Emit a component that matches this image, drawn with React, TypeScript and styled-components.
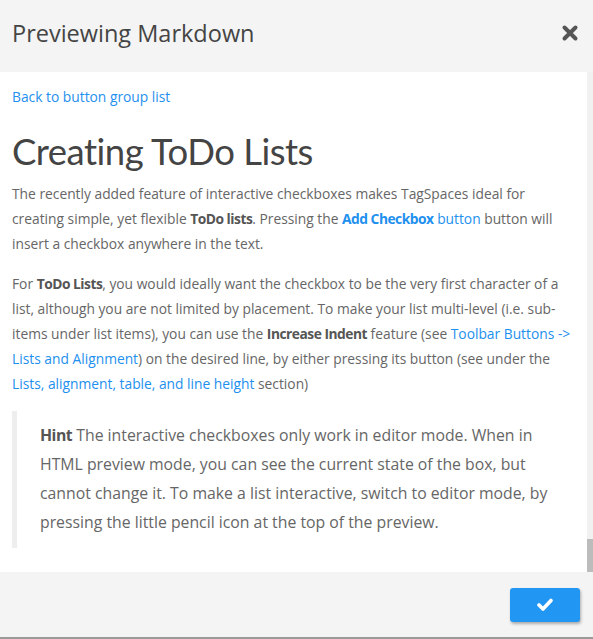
import React from "react";
import styled, { createGlobalStyle } from "styled-components";

const GlobalStyle = createGlobalStyle`
  html, body { margin: 0; padding: 0; }
  body {
    font-family: "Open Sans", "Noto Sans", sans-serif;
    background: #f4f4f4;
  }
  * { box-sizing: border-box; }
`;

const Dialog = styled.div`
  width: 593px;
  height: 639px;
  display: flex;
  flex-direction: column;
  background: #f4f4f4;
  border-bottom: 2px solid #9a9a9a;
`;

const Header = styled.header`
  height: 72px;
  flex: none;
  display: flex;
  align-items: center;
  justify-content: space-between;
  padding: 0 14px 7px 12px;
`;

const Title = styled.h1`
  margin: 0;
  font-size: 23.5px;
  font-weight: 400;
  color: #444;
`;

const CloseButton = styled.button`
  border: none;
  background: none;
  padding: 0;
  width: 18px;
  height: 18px;
  display: flex;
  cursor: pointer;
`;

const Body = styled.div`
  flex: none;
  height: 500px;
  display: flex;
`;

const Content = styled.div`
  flex: 1;
  background: #fff;
  padding: 12px 4px 0 12px;
  overflow: hidden;
  color: #666;
  font-size: 13.8px;
  line-height: 25px;
`;

const Track = styled.div`
  width: 6px;
  flex: none;
  background: #f1f1f1;
  position: relative;
`;

const Thumb = styled.div`
  position: absolute;
  left: 0;
  right: 0;
  bottom: 0;
  height: 33px;
  background: #bcbcbc;
`;

const Link = styled.a<{ $bold?: boolean }>`
  color: #1e90ee;
  text-decoration: none;
  font-weight: ${(p) => (p.$bold ? 700 : 400)};
  letter-spacing: ${(p) => (p.$bold ? "-0.5px" : "normal")};
`;

const Heading = styled.h2`
  margin: 20px 0 8px;
  font-family: Lato, "Open Sans", sans-serif;
  font-size: 36.5px;
  letter-spacing: -0.5px;
  line-height: 44px;
  font-weight: 400;
  color: #444;
`;

const Para = styled.p`
  margin: 0 0 15px;
  white-space: nowrap;
`;

const Strong = styled.strong`
  color: #555;
  font-weight: 700;
  letter-spacing: -0.5px;
`;

const Quote = styled.blockquote`
  margin: 0 8px 0 0;
  padding: 10px 20px 11px 23px;
  border-left: 5px solid #eee;
  font-size: 15.8px;
  line-height: 29px;
  white-space: nowrap;
`;

const Footer = styled.footer`
  flex: 1;
  display: flex;
  align-items: center;
  justify-content: flex-end;
  padding: 0 13px 0 0;
`;

const OkButton = styled.button`
  width: 70px;
  height: 34px;
  border: none;
  border-radius: 3px;
  background: #2196f3;
  box-shadow: 1px 2px 3px rgba(0, 0, 0, 0.3);
  display: flex;
  align-items: center;
  justify-content: center;
  cursor: pointer;
`;

const CloseIcon = () => (
  <svg width="18" height="18" viewBox="0 0 18 18">
    <path d="M3.5 3.5 L14.5 14.5 M14.5 3.5 L3.5 14.5" stroke="#555" strokeWidth="4" strokeLinecap="round" />
  </svg>
);

const CheckIcon = () => (
  <svg width="16" height="13" viewBox="0 0 16 13">
    <path d="M2 7 L6 11 L14 2.5" stroke="#fff" strokeWidth="3.6" fill="none" strokeLinecap="round" strokeLinejoin="round" />
  </svg>
);

export default function App() {
  return (
    <>
      <GlobalStyle />
      <Dialog>
        <Header>
          <Title>Previewing Markdown</Title>
          <CloseButton aria-label="Close">
            <CloseIcon />
          </CloseButton>
        </Header>
        <Body>
          <Content>
            <Link href="#">Back to button group list</Link>
            <Heading>Creating ToDo Lists</Heading>
            <Para>
              The recently added feature of interactive checkboxes makes TagSpaces ideal for
              <br />
              creating simple, yet flexible <Strong>ToDo lists</Strong>. Pressing the{" "}
              <Link href="#" $bold>Add Checkbox</Link> <Link href="#">button</Link> button will
              <br />
              insert a checkbox anywhere in the text.
            </Para>
            <Para>
              For <Strong>ToDo Lists</Strong>, you would ideally want the checkbox to be the very first character of a
              <br />
              list, although you are not limited by placement. To make your list multi-level (i.e. sub-
              <br />
              items under list items), you can use the <Strong>Increase Indent</Strong> feature (see{" "}
              <Link href="#">
                Toolbar Buttons -&gt;
                <br />
                Lists and Alignment
              </Link>
              ) on the desired line, by either pressing its button (see under the
              <br />
              <Link href="#">Lists, alignment, table, and line height</Link> section)
            </Para>
            <Quote>
              <Strong>Hint</Strong> The interactive checkboxes only work in editor mode. When in
              <br />
              HTML preview mode, you can see the current state of the box, but
              <br />
              cannot change it. To make a list interactive, switch to editor mode, by
              <br />
              pressing the little pencil icon at the top of the preview.
            </Quote>
          </Content>
          <Track>
            <Thumb />
          </Track>
        </Body>
        <Footer>
          <OkButton aria-label="OK">
            <CheckIcon />
          </OkButton>
        </Footer>
      </Dialog>
    </>
  );
}
